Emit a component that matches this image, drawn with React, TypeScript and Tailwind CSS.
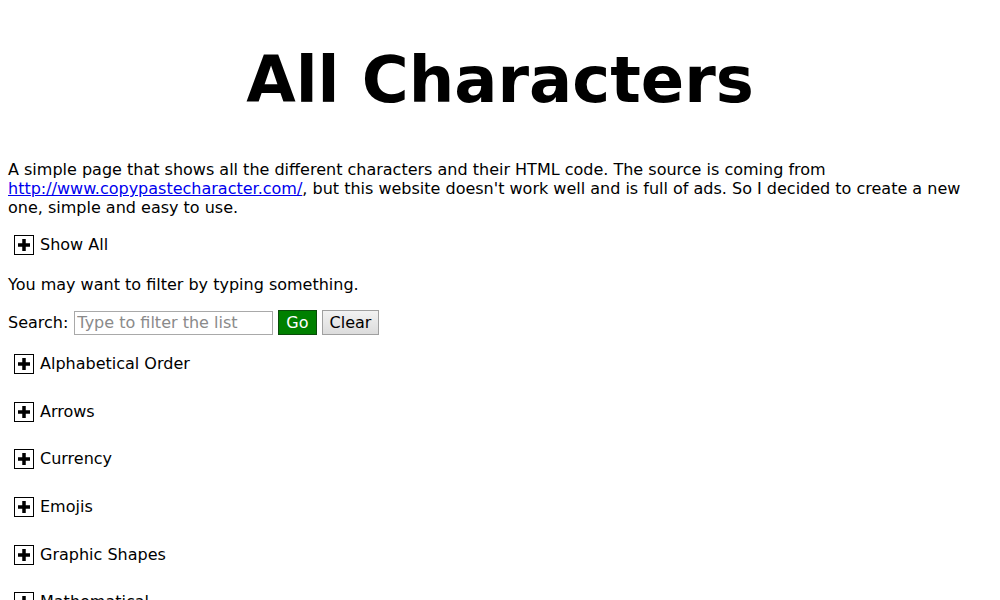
const categories = [
  "Alphabetical Order",
  "Arrows",
  "Currency",
  "Emojis",
  "Graphic Shapes",
  "Mathematical",
];

function PlusBox() {
  return (
    <span className="inline-flex h-[20px] w-[20px] items-center justify-center border border-black bg-white">
      <svg width="12" height="12" viewBox="0 0 12 12" aria-hidden="true">
        <rect x="4.25" y="0" width="3.5" height="12" fill="black" />
        <rect x="0" y="4.25" width="12" height="3.5" fill="black" />
      </svg>
    </span>
  );
}

function Toggle({ label }: { label: string }) {
  return (
    <div className="flex items-center gap-[6px] pl-[6px] h-[20px]">
      <PlusBox />
      <span>{label}</span>
    </div>
  );
}

export default function App() {
  return (
    <div className="min-h-[600px] bg-white p-[8px] text-[16px] text-black font-['DejaVu_Sans',sans-serif]">
      <h1 className="mt-[35px] mb-[43px] text-center text-[64px] font-bold leading-[74px]">
        All Characters
      </h1>

      <p className="leading-[19px]">
        A simple page that shows all the different characters and their HTML code. The source is coming from{" "}
        <a href="#" className="text-[#0000ee] underline">
          http://www.copypastecharacter.com/
        </a>
        , but this website doesn't work well and is full of ads. So I decided to create a new one, simple and easy to use.
      </p>

      <div className="mt-[18px]">
        <Toggle label="Show All" />
      </div>

      <p className="mt-[20px] leading-[19px]">You may want to filter by typing something.</p>

      <div className="mt-[16px] flex items-center">
        <span className="mr-[6px]">Search:</span>
        <input
          type="text"
          placeholder="Type to filter the list"
          className="h-[24px] w-[199px] border border-[#a9a9a9] px-[2px] text-[16px] placeholder:text-[#8a8a8a] outline-none"
        />
        <button className="ml-[5px] h-[25px] border border-[#0a4a0a] bg-[#008000] px-[7px] text-white">
          Go
        </button>
        <button className="ml-[5px] h-[25px] border border-[#a0a0a0] bg-gradient-to-b from-[#f2f2f2] to-[#dcdcdc] px-[7px] text-black">
          Clear
        </button>
      </div>

      <div className="mt-[19px] flex flex-col gap-[27.7px]">
        {categories.map((c) => (
          <Toggle key={c} label={c} />
        ))}
      </div>
    </div>
  );
}
